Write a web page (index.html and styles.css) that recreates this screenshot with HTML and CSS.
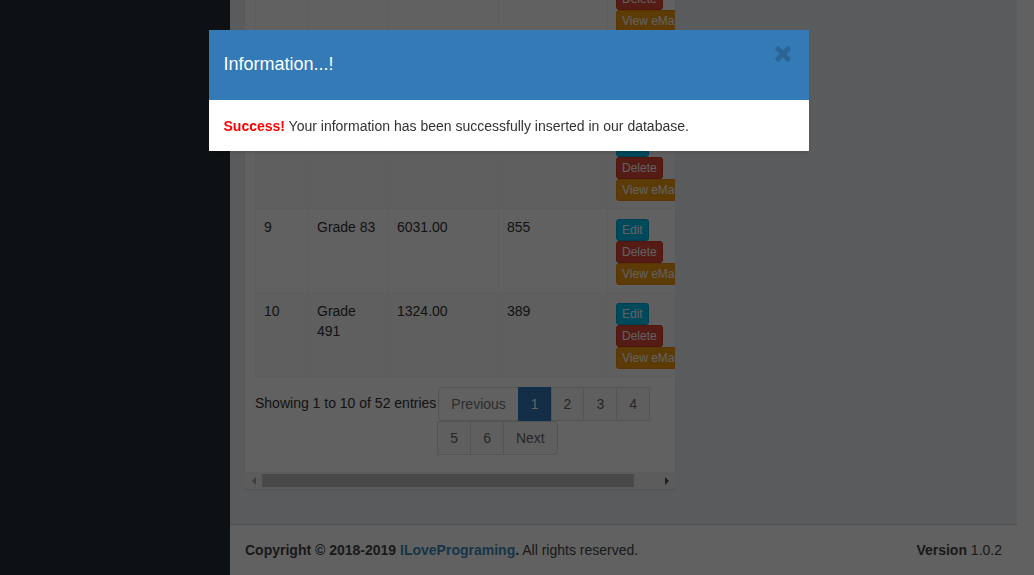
FILE: index.html
```html
<!DOCTYPE html>
<html lang="en">
<head>
<meta charset="utf-8">
<title>Grades</title>
<link rel="stylesheet" href="styles.css">
</head>
<body>
<div class="wrapper">
  <aside class="sidebar"></aside>
  <div class="main">
    <section class="content">
      <div class="box">
        <div class="scroller">
          <div class="box-body">
            <table class="tbl">
              <colgroup>
                <col class="c-id"><col class="c-name"><col class="c-price"><col class="c-num"><col class="c-act">
              </colgroup>
              <tbody>
                <tr>
                  <td>7</td><td>Grade 12</td><td>4500.00</td><td>120</td>
                  <td><div class="acts"><span class="btn info">Edit</span><span class="btn danger">Delete</span><span class="btn warning">View eMail</span></div></td>
                </tr>
                <tr class="odd">
                  <td>8</td><td>Grade 7</td><td>2750.00</td><td>604</td>
                  <td><div class="acts tall"><span class="btn info">Edit</span><span class="btn danger">Delete</span><span class="btn warning">View eMail</span></div></td>
                </tr>
                <tr>
                  <td>9</td><td>Grade 83</td><td>6031.00</td><td>855</td>
                  <td><div class="acts"><span class="btn info">Edit</span><span class="btn danger">Delete</span><span class="btn warning">View eMail</span></div></td>
                </tr>
                <tr class="odd">
                  <td>10</td><td>Grade 491</td><td>1324.00</td><td>389</td>
                  <td><div class="acts"><span class="btn info">Edit</span><span class="btn danger">Delete</span><span class="btn warning">View eMail</span></div></td>
                </tr>
              </tbody>
            </table>
            <div class="dt-bottom">
              <div class="dt-info">Showing 1 to 10 of 52 entries</div>
              <ul class="pagination">
                <li class="disabled"><a>Previous</a></li>
                <li class="active"><a>1</a></li>
                <li><a>2</a></li>
                <li><a>3</a></li>
                <li><a>4</a></li>
                <li><a>5</a></li>
                <li><a>6</a></li>
                <li><a>Next</a></li>
              </ul>
            </div>
          </div>
        </div>
        <div class="hscroll">
          <span class="sb-btn"><i class="arr left"></i></span>
          <span class="sb-thumb"></span>
          <span class="sb-track"></span>
          <span class="sb-btn"><i class="arr right"></i></span>
        </div>
      </div>
    </section>
    <footer class="footer">
      <div><strong>Copyright &copy; 2018-2019 <a class="brand">ILovePrograming</a>.</strong> All rights reserved.</div>
      <div><b>Version</b> 1.0.2</div>
    </footer>
  </div>
</div>

<div class="backdrop"></div>
<div class="modal-layer">
  <div class="modal">
    <div class="modal-header">
      <h4 class="modal-title">Information...!</h4>
      <span class="close" aria-label="Close">
        <svg width="18" height="18" viewBox="0 0 18 18"><path d="M2.5 2.5 L15.5 15.5 M15.5 2.5 L2.5 15.5" stroke="#2b6394" stroke-width="4.6" fill="none"/></svg>
      </span>
    </div>
    <div class="modal-body">
      <strong class="ok">Success!</strong> Your information has been successfully inserted in our database.
    </div>
  </div>
</div>
</body>
</html>
```

FILE: styles.css
```css
* { box-sizing: border-box; }

html, body {
  margin: 0;
  height: 100%;
}

body {
  background: #fff;
  padding-right: 17px;
  font-family: "Liberation Sans", Arial, sans-serif;
  font-size: 14px;
  line-height: 20px;
  color: #333;
  overflow: hidden;
}

.wrapper {
  display: flex;
  height: 575px;
}

.sidebar {
  width: 230px;
  flex: 0 0 230px;
  background: #222d32;
}

.main {
  flex: 1;
  display: flex;
  flex-direction: column;
  background: #ecf0f5;
  min-width: 0;
}

.content {
  flex: 1;
  overflow: hidden;
  padding: 0 15px;
}

.box {
  width: 430px;
  margin-top: -58px;
  background: #fff;
  border-top: 3px solid #d2d6de;
  box-shadow: 0 1px 1px rgba(0, 0, 0, 0.1);
}

.scroller {
  overflow: hidden;
}

.box-body {
  width: 462px;
  padding: 10px;
}

.tbl {
  width: 442px;
  table-layout: fixed;
  border-collapse: collapse;
  margin-bottom: 10px;
}

.c-id { width: 53px; }
.c-name { width: 80px; }
.c-price { width: 110px; }
.c-num { width: 109px; }
.c-act { width: 90px; }

.tbl td {
  border: 1px solid #f4f4f4;
  padding: 8px 8px 7px;
  vertical-align: top;
  line-height: 20px;
}

.tbl tr.odd td {
  background: #f9f9f9;
}

.acts {
  display: flex;
  flex-direction: column;
  align-items: flex-start;
  padding-top: 2px;
}

.acts.tall {
  height: 153px;
  justify-content: flex-end;
}

.btn {
  display: block;
  white-space: nowrap;
  font-size: 12px;
  line-height: 18px;
  padding: 1px 5px;
  border: 1px solid transparent;
  border-radius: 3px;
  color: #fff;
}

.btn.info { background: #00c0ef; border-color: #00acd6; }
.btn.danger { background: #dd4b39; border-color: #d73925; }
.btn.warning { background: #f39c12; border-color: #e08e0b; }

.dt-bottom {
  display: flex;
  align-items: flex-start;
  margin-bottom: 7px;
}

.dt-info {
  padding-top: 6px;
  white-space: nowrap;
  color: #333;
}

.pagination {
  list-style: none;
  margin: 0 0 0 2px;
  padding: 0;
  display: flex;
  flex-wrap: wrap;
  width: 240px;
}

.pagination li {
  margin-left: -1px;
}

.pagination li:first-child {
  margin-left: 0;
}

.pagination a {
  display: block;
  padding: 6px 12px;
  line-height: 20px;
  border: 1px solid #ddd;
  background: #fafafa;
  color: #666;
}

.pagination li:first-child a {
  border-radius: 4px 0 0 4px;
}

.pagination li:last-child a {
  border-radius: 0 4px 4px 0;
}

.pagination li.disabled a {
  color: #777;
  background: #fff;
}

.pagination li.active a {
  background: #337ab7;
  border-color: #337ab7;
  color: #fff;
}

.hscroll {
  display: flex;
  height: 17px;
  background: #f1f1f1;
}

.sb-btn {
  width: 17px;
  flex: 0 0 17px;
  display: flex;
  align-items: center;
  justify-content: center;
}

.arr {
  width: 0;
  height: 0;
  border-top: 4px solid transparent;
  border-bottom: 4px solid transparent;
}

.arr.left { border-right: 4px solid #a3a3a3; }
.arr.right { border-left: 4px solid #505050; }

.sb-thumb {
  width: 372px;
  flex: 0 0 372px;
  margin: 2px 0;
  background: #c1c1c1;
}

.sb-track { flex: 1; }

.footer {
  flex: 0 0 51px;
  display: flex;
  justify-content: space-between;
  padding: 15px;
  border-top: 1px solid #d2d6de;
  background: #fff;
  color: #444;
}

.brand { color: #3c8dbc; }

.backdrop {
  position: fixed;
  inset: 0;
  background: rgba(0, 0, 0, 0.62);
}

.modal-layer {
  position: fixed;
  top: 0;
  left: 0;
  right: 17px;
  bottom: 0;
  display: flex;
  justify-content: center;
  align-items: flex-start;
  padding-top: 30px;
}

.modal {
  width: 600px;
  background: #fff;
  box-shadow: 0 2px 3px rgba(0, 0, 0, 0.125);
}

.modal-header {
  height: 70px;
  background: #337ab7;
  display: flex;
  justify-content: space-between;
  align-items: flex-start;
  padding: 15px 17px 0 15px;
}

.modal-title {
  margin: 6px 0 0;
  font-size: 18px;
  line-height: 26px;
  font-weight: normal;
  color: #fff;
}

.close {
  display: block;
  width: 18px;
  height: 18px;
}

.close svg { display: block; }

.modal-body {
  padding: 16px 15px 15px;
  line-height: 20px;
  color: #333;
}

.ok { color: #ff0000; }
```
